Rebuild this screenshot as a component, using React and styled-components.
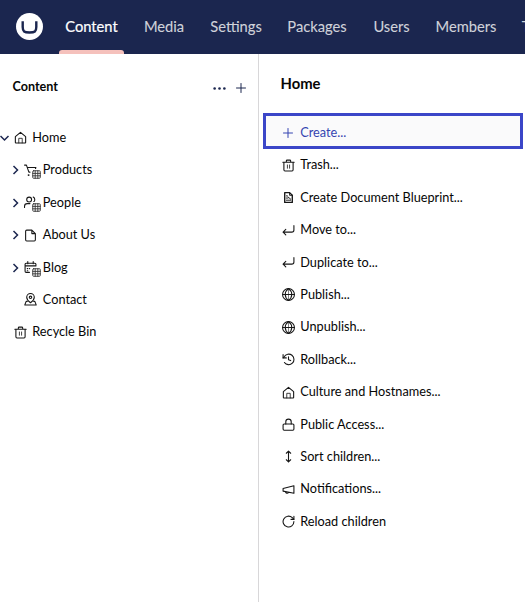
import React from "react";
import styled, { createGlobalStyle } from "styled-components";

const Global = createGlobalStyle`
  * { box-sizing: border-box; }
  html, body { margin: 0; padding: 0; overflow: hidden; background: #fff; }
  body { font-family: Lato, "Liberation Sans", sans-serif; font-size: 12.72px; color: #060606; }
`;

const Shell = styled.div`
  width: 525px;
  height: 602px;
  display: flex;
  flex-direction: column;
  overflow: hidden;
`;
const Header = styled.header`
  flex: none;
  height: 54px;
  display: flex;
  align-items: stretch;
  background: #1b264f;
  padding-left: 16px;
  overflow: hidden;
`;
const Logo = styled.svg`
  flex: none;
  width: 27px;
  height: 27px;
  margin: 13px 16px 0 0;
`;
const Tab = styled.a`
  position: relative;
  flex: none;
  width: ${(p) => p.$w}px;
  text-align: center;
  white-space: nowrap;
  font-size: 14.7px;
  line-height: ${(p) => (p.$active ? 53 : 52)}px;
  color: ${(p) => (p.$active ? "#fff" : "#d0d2da")};
  -webkit-text-stroke: ${(p) => (p.$active ? "0.2px" : "0.1px")};
  &::after {
    content: "";
    display: ${(p) => (p.$active ? "block" : "none")};
    position: absolute;
    left: 0;
    right: 0;
    bottom: 0;
    height: 4px;
    border-radius: 3px 3px 0 0;
    background: #f5c1bc;
  }
`;
const Body = styled.main`
  flex: 1;
  display: flex;
  min-height: 0;
`;
const Sidebar = styled.nav`
  width: 259px;
  flex: none;
  border-right: 1px solid #d8d7d9;
`;
const SidebarHead = styled.div`
  height: 66.8px;
  display: flex;
  align-items: center;
  padding: 0 11px 0 12.5px;
`;
const SidebarTitle = styled.h3`
  flex: 1;
  margin: -1px 0 0;
  font-size: 12.6px;
  font-weight: 700;
`;
const HeadActions = styled.div`
  display: flex;
  align-items: center;
  gap: 9px;
  margin-top: 2px;
  color: #1b264f;
`;
const TreeRow = styled.div`
  height: 32.4px;
  display: flex;
  align-items: center;
  padding-left: ${(p) => p.$indent}px;
  white-space: nowrap;
`;
const Caret = styled.svg`
  flex: none;
  width: 10px;
  height: 10px;
  margin-right: ${(p) => p.$gap}px;
  margin-top: 2px;
  color: #1b264f;
`;
const IconBox = styled.span`
  position: relative;
  flex: none;
  width: 14px;
  height: 14px;
  margin-right: 5.3px;
  margin-top: 2px;
  padding: 0.5px;
  color: ${(p) => p.$color || "#161616"};
`;
const Svg = styled.svg`
  display: block;
`;
const Badge = styled.span`
  position: absolute;
  left: 7px;
  top: 6px;
  padding: 1px 0 0 1px;
  background: #fff;
  color: #333;
`;
const Panel = styled.section`
  flex: 1;
  padding: 0 2px 0 4px;
`;
const PanelTitle = styled.h2`
  margin: 0;
  height: 59px;
  padding-left: 17.5px;
  line-height: 59px;
  font-size: 14.8px;
  font-weight: 700;
`;
const Action = styled.div`
  height: 32.4px;
  display: flex;
  align-items: center;
  padding-left: 18px;
  white-space: nowrap;
`;
const Highlighted = styled(Action)`
  height: 36px;
  padding: 2px 0 0 15px;
  border: 3px solid #3b46c8;
  background: #fafafb;
  color: #3544b1;
  margin-bottom: -0.8px;
`;

const paths = {
  home: <><path d="M2.500 21V10.500L12 2.500l9.500 8V21a1 1 0 0 1-1 1h-17a1 1 0 0 1-1-1z" /><path d="M8.800 22v-8.500h6.400V22" strokeWidth="1.500" /></>,
  trash: <><path d="M1.500 6h21M8 6V3.500A1.500 1.500 0 0 1 9.500 2h5A1.500 1.500 0 0 1 16 3.500V6M3.500 6v14a2 2 0 0 0 2 2h13a2 2 0 0 0 2-2V6" /><path d="M10 11v6M14 11v6" strokeWidth="1.500" /></>,
  file: <path d="M14.500 2H5a2 2 0 0 0-2 2v16a2 2 0 0 0 2 2h14a2 2 0 0 0 2-2V8.500zM14.500 2v6.500H21" />,
  blueprint: <><path d="M14 3H5v18h14V8z" strokeWidth="2.500" /><path d="M14 3v5h5M8 9h2M8 13h3M8 17h8M11 11l5 4" strokeWidth="1.700" /></>,
  enter: <path d="m7 10-5 5 5 5M2 15h16a4 4 0 0 0 4-4V3" />,
  globe: <><circle cx="12" cy="12" r="11" /><path d="M1 12h22" /><path d="M12 1c-8 6-8 16 0 22 8-6 8-16 0-22z" /><path d="M12 2v20" strokeWidth="1" /></>,
  history: <><path d="M4.500 17.500A9.700 9.700 0 1 0 4 7L2 9" /><path d="M2 3v6h6M12 7v5.500l4 1.500" /></>,
  lock: <><rect x="2" y="11" width="20" height="11.500" rx="2" /><path d="M7 11V7a5 5 0 0 1 10 0v4" /></>,
  sort: <path d="m8 18 4 4 4-4M12 2v20M8 6l4-4 4 4" />,
  megaphone: <path d="m2 10 20-5v14L2 15zM12 17.500a3 3 0 0 1-5.600-1.500" />,
  reload: <><path d="M22 12a10 10 0 1 1-3-7l3 3" /><path d="M22 2.500V8h-5.500" /></>,
  plus: <path d="M3 12h18M12 3v18" />,
  dots: <><circle cx="3" cy="12" r="2.400" fill="currentColor" stroke="none" /><circle cx="12" cy="12" r="2.400" fill="currentColor" stroke="none" /><circle cx="21" cy="12" r="2.400" fill="currentColor" stroke="none" /></>,
  cart: <><path d="M1 2h3.500l4.500 13h2M6 6.500h16l-1 3" /><circle cx="8.500" cy="20.500" r=".8" /></>,
  people: <><circle cx="9.500" cy="6.500" r="4.500" /><path d="M1 21v-2a5 5 0 0 1 5-5h5M17 2a5.500 5.500 0 0 1 1 9" /></>,
  calendar: <><path d="M7 1v4M17 1v4M10 21H4a2 2 0 0 1-2-2V6a2 2 0 0 1 2-2h16a2 2 0 0 1 2 2v3M2 9h20" /><path d="M6 14h1M10 14h.5M6 18h1" /></>,
  contact: <><path d="M12 18s-7-5-7-10a7 7 0 0 1 14 0C19 13 12 18 12 18z" /><circle cx="12" cy="8" r="2.300" /><path d="M6 15.500H4L1.500 22h21L20 15.500h-2" /></>,
  grid: <><rect x="2" y="2" width="20" height="20" rx="2" /><path d="M2 9h20M2 15.500h20M8.500 2v20M15.500 2v20" /></>,
};

function Glyph({ name, size = 13, weight = 2 }) {
  return (
    <Svg width={size} height={size} viewBox="0 0 24 24" fill="none" stroke="currentColor" strokeWidth={weight} strokeLinecap="round" strokeLinejoin="round">
      {paths[name]}
    </Svg>
  );
}

const tabs = [["Content", 65], ["Media", 80], ["Settings", 64], ["Packages", 98], ["Users", 51], ["Members", 98], ["Translation", 84]];

const tree = [
  { label: "Home", icon: "home", indent: 0, caret: "down", gap: 3 },
  { label: "Products", icon: "cart", indent: 10, caret: "right", badge: true },
  { label: "People", icon: "people", indent: 10, caret: "right", badge: true },
  { label: "About Us", icon: "file", indent: 10, caret: "right" },
  { label: "Blog", icon: "calendar", indent: 10, caret: "right", badge: true },
  { label: "Contact", icon: "contact", indent: 23.5 },
  { label: "Recycle Bin", icon: "trash", indent: 13 },
];

const actions = [
  ["Trash...", "trash"],
  ["Create Document Blueprint...", "blueprint"],
  ["Move to...", "enter"],
  ["Duplicate to...", "enter"],
  ["Publish...", "globe"],
  ["Unpublish...", "globe"],
  ["Rollback...", "history"],
  ["Culture and Hostnames...", "home"],
  ["Public Access...", "lock"],
  ["Sort children...", "sort"],
  ["Notifications...", "megaphone"],
  ["Reload children", "reload"],
];

export default function App() {
  return (
    <Shell>
      <Global />
      <Header>
        <Logo viewBox="0 0 27 27">
          <circle cx="13.500" cy="13.500" r="13.500" fill="#fff" />
          <path d="M6.700 8.300v5.700c0 4.500 1.500 5.500 6.800 5.500s6.800-1 6.800-5.500V8.300" fill="none" stroke="#1b264f" strokeWidth="2.400" />
        </Logo>
        {tabs.map(([label, w], i) => (
          <Tab key={label} $w={w} $active={i === 0}>{label}</Tab>
        ))}
      </Header>
      <Body>
        <Sidebar>
          <SidebarHead>
            <SidebarTitle>Content</SidebarTitle>
            <HeadActions>
              <Glyph name="dots" />
              <Glyph name="plus" size={12} />
            </HeadActions>
          </SidebarHead>
          {tree.map((n) => (
            <TreeRow key={n.label} $indent={n.indent}>
              {n.caret && (
                <Caret $gap={n.gap ?? 3.5} viewBox="0 0 10 10" fill="none" stroke="currentColor" strokeWidth="1.500">
                  <path d={n.caret === "down" ? "M.5 3 4.500 7l4-4" : "M3.500 1 7.500 5l-4 4"} />
                </Caret>
              )}
              <IconBox>
                <Glyph name={n.icon} />
                {n.badge && <Badge><Glyph name="grid" size={9} weight={2.4} /></Badge>}
              </IconBox>
              {n.label}
            </TreeRow>
          ))}
        </Sidebar>
        <Panel>
          <PanelTitle>Home</PanelTitle>
          <Highlighted>
            <IconBox $color="#3544b1"><Glyph name="plus" size={12} weight={2} /></IconBox>
            Create...
          </Highlighted>
          {actions.map(([label, icon]) => (
            <Action key={label}>
              <IconBox><Glyph name={icon} /></IconBox>
              {label}
            </Action>
          ))}
        </Panel>
      </Body>
    </Shell>
  );
}
